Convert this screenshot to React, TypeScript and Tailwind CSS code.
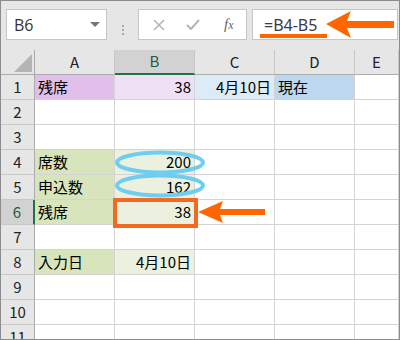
import React from "react";

const cols = ["A", "B", "C", "D", "E"];
const colW = ["w-[80px]", "w-[80px]", "w-[80px]", "w-[80px]", "flex-1"];

type Cell = { text?: string; bg?: string; right?: boolean };

const data: Record<number, Record<string, Cell>> = {
  1: {
    A: { text: "残席", bg: "bg-[#e0bfea]" },
    B: { text: "38", bg: "bg-[#f0e0f6]", right: true },
    C: { text: "4月10日", bg: "bg-[#ddebf7]", right: true },
    D: { text: "現在", bg: "bg-[#bdd7ee]" },
  },
  4: {
    A: { text: "席数", bg: "bg-[#d8e4bc]" },
    B: { text: "200", bg: "bg-[#ebf1de]", right: true },
  },
  5: {
    A: { text: "申込数", bg: "bg-[#d8e4bc]" },
    B: { text: "162", bg: "bg-[#ebf1de]", right: true },
  },
  6: {
    A: { text: "残席", bg: "bg-[#d8e4bc]" },
    B: { text: "38", bg: "bg-[#ebf1de]", right: true },
  },
  8: {
    A: { text: "入力日", bg: "bg-[#d8e4bc]" },
    B: { text: "4月10日", bg: "bg-[#ebf1de]", right: true },
  },
};

const cellFont = { fontFamily: '"Noto Sans CJK JP", "Liberation Sans", sans-serif' };

function Toolbar() {
  return (
    <div className="flex h-[49px] bg-[#e6e6e6] pl-[5px] pt-[8px]">
      {/* name box */}
      <div className="flex h-[31px] w-[101px] items-center justify-between border border-[#c6c6c6] bg-white pl-[7px] pr-[6px]">
        <span className="text-[16px] text-[#333]" style={{ fontFamily: '"Open Sans", sans-serif' }}>
          B6
        </span>
        <svg width="10" height="6" viewBox="0 0 10 6">
          <path d="M0 0 L10 0 L5 5 Z" fill="#777" />
        </svg>
      </div>
      <div className="flex w-[31px] flex-col items-center justify-center gap-[2px]">
        <span className="h-[2px] w-[2px] bg-[#aaa]" />
        <span className="h-[2px] w-[2px] bg-[#aaa]" />
        <span className="h-[2px] w-[2px] bg-[#aaa]" />
      </div>
      {/* cancel / enter / fx */}
      <div className="flex h-[31px] w-[109px] items-center border border-[#c6c6c6] bg-white">
        <svg width="12" height="12" viewBox="0 0 12 12" className="ml-[14px]">
          <path d="M1 1 L11 11 M11 1 L1 11" stroke="#b5b5b5" strokeWidth="1.6" />
        </svg>
        <svg width="14" height="11" viewBox="0 0 14 11" className="ml-[21px]">
          <path d="M1 6 L5 10 L13 1" stroke="#b5b5b5" strokeWidth="2" fill="none" />
        </svg>
        <span
          className="ml-[24px] text-[15px] italic text-[#666]"
          style={{ fontFamily: '"Liberation Serif", serif' }}
        >
          f<span className="text-[12px]">x</span>
        </span>
      </div>
      <div className="ml-[5px] mr-[1px] flex h-[31px] flex-1 items-center border border-[#c6c6c6] bg-white pl-[11px]">
        <span className="text-[16px] text-[#3a3a4a]" style={{ fontFamily: '"Noto Sans", sans-serif' }}>
          =B4-B5
        </span>
      </div>
    </div>
  );
}

function HeaderRow() {
  return (
    <div className="flex h-[25px]">
      <div className="relative w-[34px] border-r border-b border-[#ababab] bg-[#e6e6e6]">
        <svg width="18" height="18" viewBox="0 0 18 18" className="absolute right-[2px] bottom-[2px]">
          <path d="M18 0 L18 18 L0 18 Z" fill="#b4b4b4" />
        </svg>
      </div>
      {cols.map((c, i) => {
        const sel = c === "B";
        return (
          <div
            key={c}
            className={`${colW[i]} flex items-center justify-center border-r border-[#c8c8c8] ${
              sel ? "border-b-2 border-b-[#217346] bg-[#d2d2d2] text-[#1d5c3a]" : "border-b border-b-[#ababab] bg-[#e6e6e6] text-[#222]"
            } text-[15px]`}
            style={cellFont}
          >
            {c}
          </div>
        );
      })}
    </div>
  );
}

function Row({ n }: { n: number }) {
  const sel = n === 6;
  const row = data[n] || {};
  return (
    <div className="flex h-[25px]">
      <div
        className={`flex w-[34px] items-center justify-center border-b border-b-[#c8c8c8] text-[15px] ${
          sel ? "border-r-2 border-r-[#217346] bg-[#d2d2d2] text-[#1d5c3a]" : "border-r border-r-[#ababab] bg-[#e6e6e6] text-[#222]"
        }`}
        style={cellFont}
      >
        {n}
      </div>
      {cols.map((c, i) => {
        const cell = row[c];
        return (
          <div
            key={c}
            className={`${colW[i]} flex items-center border-r border-b border-[#d4d4d4] px-[3px] text-[15px] text-black ${
              cell?.bg ?? "bg-white"
            } ${cell?.right ? "justify-end" : "justify-start"}`}
            style={cellFont}
          >
            {cell?.text}
          </div>
        );
      })}
    </div>
  );
}

function Marks() {
  return (
    <svg className="pointer-events-none absolute left-0 top-0" width="400" height="340" viewBox="0 0 400 340">
      {/* formula bar */}
      <rect x="259" y="33" width="67" height="4" fill="#ff6600" />
      <path
        d="M325 23 L350 10 L346 20 L393 20 L393 27 L346 27 L350 37 Z"
        fill="#ff6600"
        stroke="#ffffff"
        strokeWidth="2"
        strokeLinejoin="round"
        paintOrder="stroke"
      />
      {/* circled inputs */}
      <ellipse cx="159" cy="161.5" rx="43" ry="10" fill="none" stroke="#6fcdf2" strokeWidth="4" />
      <ellipse cx="159" cy="184.5" rx="43" ry="10" fill="none" stroke="#6fcdf2" strokeWidth="4" />
      {/* result */}
      <rect x="114" y="199" width="81" height="26" fill="none" stroke="#f26a21" strokeWidth="4" />
      <path d="M197 211 L222 200 L219 208 L264 208 L264 214 L219 214 L222 222 Z" fill="#ff6600" />
    </svg>
  );
}

export default function App() {
  return (
    <div className="relative h-[340px] w-[400px] overflow-hidden border border-[#8c8c8c] bg-white">
      <Toolbar />
      <HeaderRow />
      {Array.from({ length: 11 }, (_, i) => (
        <Row key={i + 1} n={i + 1} />
      ))}
      <Marks />
    </div>
  );
}
